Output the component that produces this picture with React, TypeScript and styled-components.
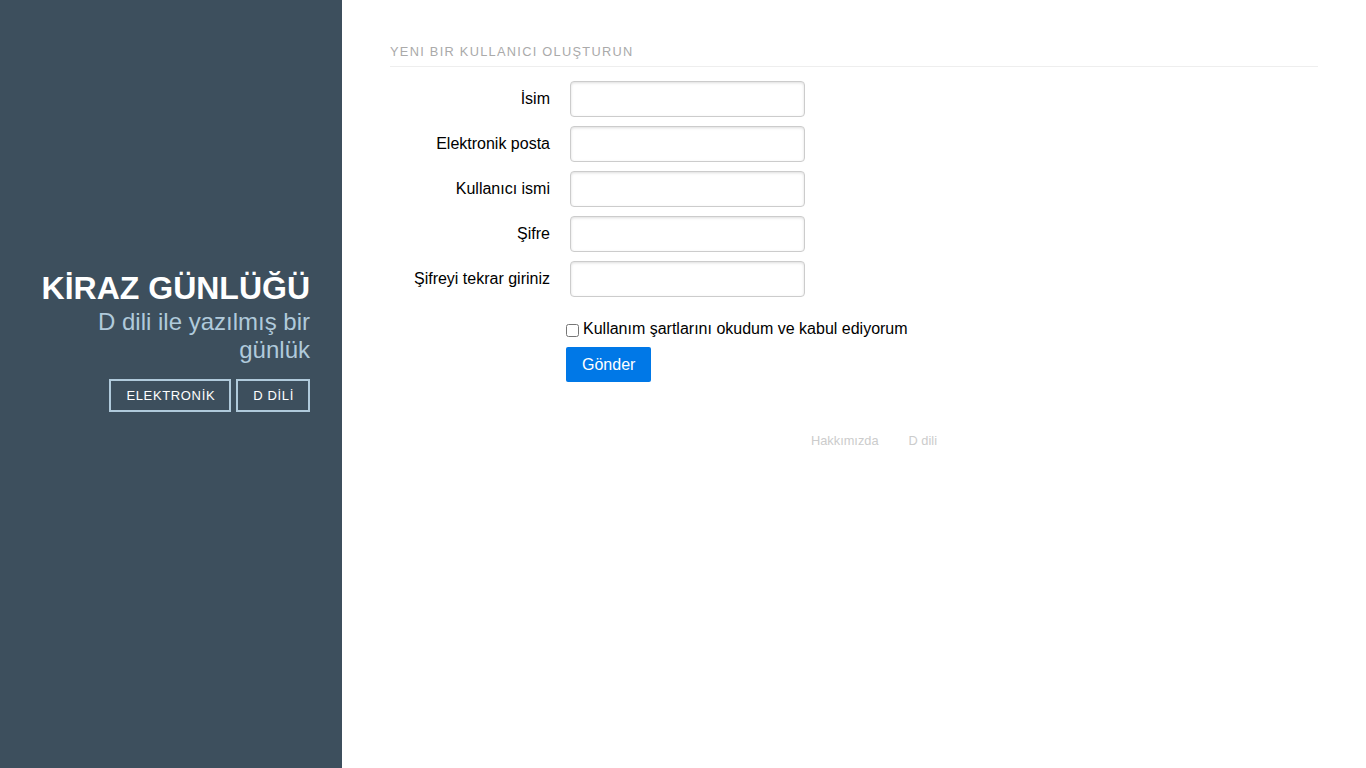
import { createGlobalStyle } from 'styled-components';
import styled from 'styled-components';

const GlobalStyle = createGlobalStyle`
  html, body {
    margin: 0;
    padding: 0;
    height: 100%;
  }
  body {
    font-family: "Liberation Sans", Helvetica, Arial, sans-serif;
    color: #000;
    background: #fff;
  }
  #root {
    height: 100%;
  }
`;

const fields = [
  { label: 'İsim', type: 'text' },
  { label: 'Elektronik posta', type: 'email' },
  { label: 'Kullanıcı ismi', type: 'text' },
  { label: 'Şifre', type: 'password' },
  { label: 'Şifreyi tekrar giriniz', type: 'password' },
];

export default function App() {
  return (
    <>
      <GlobalStyle />
      <Layout>
        <Sidebar>
          <Header>
            <BrandTitle>KİRAZ GÜNLÜĞÜ</BrandTitle>
            <BrandTagline>D dili ile yazılmış bir günlük</BrandTagline>
            <NavList>
              <NavButton href="#">ELEKTRONİK</NavButton>
              <NavButton href="#">D DİLİ</NavButton>
            </NavList>
          </Header>
        </Sidebar>
        <Content>
          <Subhead>Yeni bir kullanıcı oluşturun</Subhead>
          <Form onSubmit={(e) => e.preventDefault()}>
            {fields.map((f) => (
              <ControlGroup key={f.label}>
                <Label>{f.label}</Label>
                <Input type={f.type} />
              </ControlGroup>
            ))}
            <Controls>
              <CheckLabel>
                <Checkbox type="checkbox" />
                Kullanım şartlarını okudum ve kabul ediyorum
              </CheckLabel>
              <SubmitButton type="submit">Gönder</SubmitButton>
            </Controls>
          </Form>
          <Footer>
            <FooterLink href="#">Hakkımızda</FooterLink>
            <FooterLink href="#">D dili</FooterLink>
          </Footer>
        </Content>
      </Layout>
    </>
  );
}

const Layout = styled.div`
  display: flex;
  min-height: 100vh;
`;

const Sidebar = styled.div`
  width: 342px;
  flex-shrink: 0;
  background: #3d4f5d;
  color: #fff;
`;

const Header = styled.div`
  padding: 268px 32px 0 32px;
  text-align: right;
`;

const BrandTitle = styled.h1`
  margin: 0;
  font-size: 32px;
  font-weight: bold;
  line-height: 40px;
`;

const BrandTagline = styled.h2`
  margin: 0;
  font-size: 24px;
  font-weight: 300;
  line-height: 28px;
  color: #b0cadb;
`;

const NavList = styled.div`
  display: flex;
  justify-content: flex-end;
  gap: 5px;
  margin-top: 15px;
`;

const NavButton = styled.a`
  display: inline-flex;
  align-items: center;
  box-sizing: border-box;
  height: 33px;
  padding: 0 14px 0 15px;
  border: 2px solid #b0cadb;
  color: #fff;
  font-size: 13px;
  letter-spacing: 0.05em;
  text-decoration: none;
`;

const Content = styled.div`
  flex: 1;
  padding: 0 48px;
`;

const Subhead = styled.h3`
  margin: 38px 0 0 0;
  padding: 5px 0;
  border-bottom: 1px solid #eee;
  color: #aaa;
  font-size: 12.8px;
  font-weight: 500;
  letter-spacing: 0.1em;
  text-transform: uppercase;
  line-height: 18px;
`;

const Form = styled.form`
  margin-top: 14px;
`;

const ControlGroup = styled.div`
  display: flex;
  align-items: center;
  margin-bottom: 9px;
`;

const Label = styled.label`
  width: 160px;
  text-align: right;
  margin-right: 20px;
  font-size: 16px;
`;

const Input = styled.input`
  box-sizing: border-box;
  width: 235px;
  height: 36px;
  padding: 8px 10px;
  border: 1px solid #ccc;
  border-radius: 4px;
  box-shadow: inset 0 1px 3px #ddd;
  font-size: 16px;
  font-family: inherit;
`;

const Controls = styled.div`
  margin: 22px 0 0 176px;
  display: flex;
  flex-direction: column;
  align-items: flex-start;
`;

const CheckLabel = styled.label`
  display: flex;
  align-items: center;
  font-size: 16px;
  line-height: 20px;
`;

const Checkbox = styled.input`
  width: 13px;
  height: 13px;
  margin: 2px 4px 0 0;
`;

const SubmitButton = styled.button`
  margin-top: 8px;
  height: 35px;
  padding: 0 16px;
  border: none;
  border-radius: 2px;
  background: #0078e7;
  color: #fff;
  font-size: 16px;
  font-family: inherit;
  cursor: pointer;
`;

const Footer = styled.div`
  display: flex;
  justify-content: center;
  gap: 30px;
  padding-left: 40px;
  margin-top: 51px;
`;

const FooterLink = styled.a`
  color: #ccc;
  font-size: 12.8px;
  text-decoration: none;
`;
